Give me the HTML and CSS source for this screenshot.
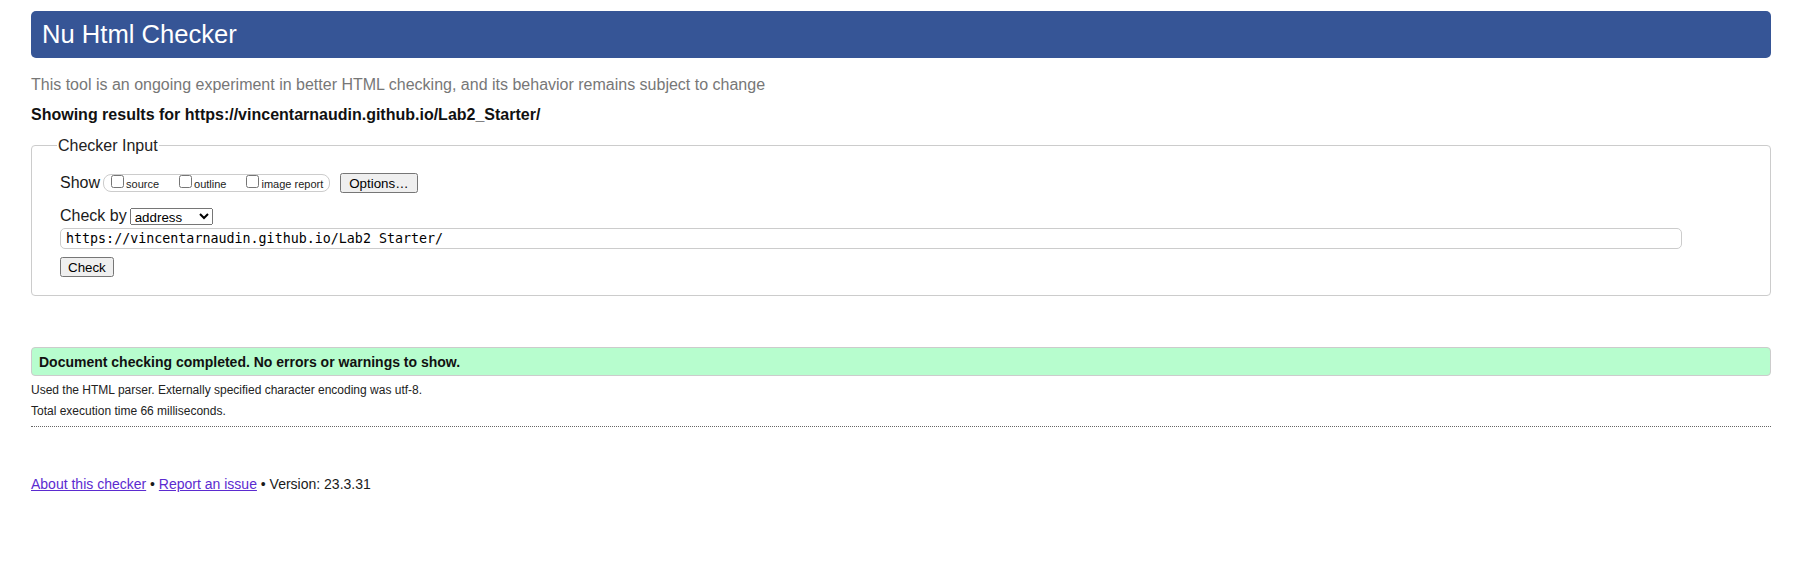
FILE: index.html
```html
<!DOCTYPE html>
<html lang="en">
<head>
<meta charset="utf-8">
<title>Showing results for https://vincentarnaudin.github.io/Lab2_Starter/ - Nu Html Checker</title>
<link rel="stylesheet" href="styles.css">
</head>
<body>
<h1 class="title">Nu Html Checker</h1>
<p class="intro">This tool is an ongoing experiment in better HTML checking, and its behavior remains subject to change</p>
<p class="showing">Showing results for https://vincentarnaudin.github.io/Lab2_Starter/</p>
<form class="checker">
  <fieldset class="input-set">
    <legend class="input-legend">Checker Input</legend>
    <div class="row row-show">
      <span class="row-label">Show</span>
      <div class="show-group">
        <label class="opt"><input type="checkbox"><span>source</span></label>
        <label class="opt"><input type="checkbox"><span>outline</span></label>
        <label class="opt"><input type="checkbox"><span>image report</span></label>
      </div>
      <button type="button" class="btn btn-options">Options…</button>
    </div>
    <div class="row row-by">
      <span class="row-label">Check by</span>
      <select class="by-select"><option>address</option></select>
    </div>
    <div class="row row-url">
      <input class="url" type="text" value="https://vincentarnaudin.github.io/Lab2 Starter/">
    </div>
    <div class="row row-submit">
      <button type="button" class="btn btn-check">Check</button>
    </div>
  </fieldset>
</form>
<div class="result">Document checking completed. No errors or warnings to show.</div>
<p class="details details-first">Used the HTML parser. Externally specified character encoding was utf-8.</p>
<p class="details">Total execution time 66 milliseconds.</p>
<hr class="sep">
<p class="footer"><a href="#" class="flink">About this checker</a> • <a href="#" class="flink">Report an issue</a> • Version: 23.3.31</p>
</body>
</html>
```
FILE: styles.css
```css
* { box-sizing: border-box; }
html { background: #fff; }
body {
  margin: 0;
  padding: 11px 25px 40px 31px;
  font-family: "Liberation Sans", Arial, sans-serif;
  font-size: 16px;
  color: #1a1a1a;
}
.title {
  margin: 0;
  height: 47px;
  line-height: 47px;
  padding: 0 11px;
  background: #365596;
  color: #fff;
  font-size: 25.6px;
  font-weight: normal;
  border-radius: 5px;
}
.intro {
  margin: 17px 0 0;
  line-height: 20px;
  color: #777;
}
.showing {
  margin: 10px 0 0;
  line-height: 20px;
  font-weight: bold;
  color: #111;
}
.checker { margin: 0; }
.input-set {
  margin: 11px 0 0;
  padding: 18px 28px 18px 28px;
  border: 1px solid #ccc;
  border-radius: 4px;
  min-width: 0;
}
.input-legend {
  padding: 0 1px;
  margin-left: -3px;
  line-height: 19px;
  font-size: 16px;
  color: #222;
}
.row { display: flex; align-items: center; }
.row-label { font-size: 16px; line-height: 18px; color: #1a1a1a; }
.row-show { height: 20px; }
.show-group {
  display: flex;
  align-items: flex-start;
  align-self: flex-start;
  height: 18px;
  margin: 1px 0 0 3px;
  padding: 0 6px 0 2px;
  border: 1px solid #ccc;
  border-radius: 8px;
}
.opt {
  display: flex;
  align-items: flex-start;
  margin-right: 15px;
  font-size: 11px;
  line-height: 13px;
  color: #222;
}
.opt:last-child { margin-right: 0; }
.opt input {
  width: 13px;
  height: 13px;
  margin: 0 2px 0 5px;
}
.opt span { padding-top: 3px; }
.btn {
  font-family: "Liberation Sans", Arial, sans-serif;
  font-size: 13.333px;
  height: 20px;
  color: #000;
}
.btn-options { margin-left: 10px; padding: 1px 7px; }
.btn-check { padding: 1px 6px; }
.row-by { height: 18px; margin-top: 14px; }
.by-select {
  margin-left: 3px;
  width: 83px;
  height: 17px;
  font-family: "Liberation Sans", Arial, sans-serif;
  font-size: 13.333px;
  color: #000;
}
.row-url { margin-top: 3px; }
.url {
  width: calc(100% - 60px);
  height: 21px;
  padding: 0 5px;
  border: 1px solid #ccc;
  border-radius: 5px;
  font-family: "DejaVu Sans Mono", "Liberation Mono", monospace;
  font-size: 13.333px;
  color: #000;
  background: #fff;
}
.row-submit { margin-top: 8px; height: 20px; }
.result {
  margin-top: 51px;
  height: 29px;
  line-height: 28px;
  padding: 0 7px;
  background: #b7fdce;
  border: 1px solid #ccc;
  border-radius: 4px;
  font-size: 14px;
  font-weight: bold;
  color: #111;
}
.details {
  margin: 0;
  font-size: 12px;
  line-height: 21px;
  color: #222;
}
.details-first { margin-top: 4px; }
.sep {
  margin: 4px 0 0;
  height: 0;
  border: 0;
  border-top: 1px dotted #666;
}
.footer {
  margin: 49px 0 0;
  font-size: 14px;
  line-height: 16px;
  color: #1a1a1a;
}
.flink { color: #5b2bd0; }
```
